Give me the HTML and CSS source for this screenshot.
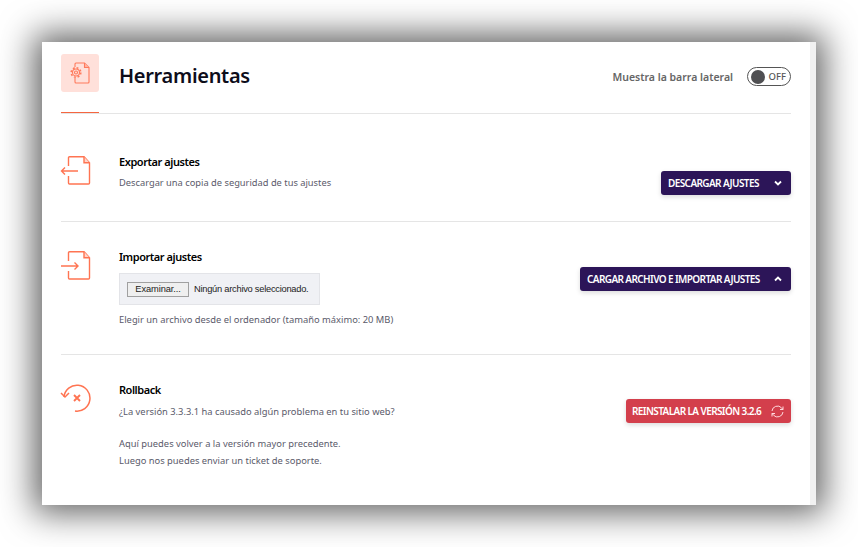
FILE: index.html
```html
<!DOCTYPE html>
<html lang="es">
<head>
<meta charset="utf-8">
<title>Herramientas</title>
<link rel="stylesheet" href="styles.css">
</head>
<body>
<main class="window">
  <div class="content">
    <header class="header">
      <div class="header-icon">
        <svg width="20" height="22" viewBox="0 0 20 22" fill="none" stroke="#ff7a5c" stroke-width="1.100">
          <path d="M5 5V2a1 1 0 0 1 1-1h8.500L19 5.500V20a1 1 0 0 1-1 1H6a1 1 0 0 1-1-1v-4"/>
          <path d="M14.500 1v4.500H19" fill="#ffb3a0"/>
          <circle cx="6" cy="10.500" r="3.500"/>
          <circle cx="6" cy="10.500" r="1.500"/>
          <circle cx="6" cy="10.500" r="4.800" stroke-width="1.600" stroke-dasharray="1.900 1.870"/>
        </svg>
      </div>
      <h1 class="title">Herramientas</h1>
      <div class="sidebar-toggle">
        <span class="toggle-label">Muestra la barra lateral</span>
        <span class="toggle"><span class="knob"></span><span class="toggle-text">OFF</span></span>
      </div>
    </header>

    <section class="row row-export">
      <svg class="row-icon" width="32" height="30" viewBox="0 0 32 30" fill="none" stroke="#ff7452" stroke-width="1.400">
        <path d="M9.500 10V1.700a1 1 0 0 1 1-1H25l5.500 6V27a1 1 0 0 1-1 1H10.500a1 1 0 0 1-1-1v-7"/>
        <path d="M25 .7v6h5.500" fill="#ffd5ca"/>
        <path d="M2.500 15H19M6 11.500 2.500 15 6 18.500"/>
      </svg>
      <div class="row-body">
        <h2 class="row-title">Exportar ajustes</h2>
        <p class="row-text row-text-tight">Descargar una copia de seguridad de tus ajustes</p>
      </div>
      <a class="btn btn-purple btn-export"><span>DESCARGAR AJUSTES</span>
        <svg class="btn-chevron" width="8" height="6" viewBox="0 0 8 6" fill="none" stroke="#fff" stroke-width="1.800"><path d="M1 1.500l3 3 3-3"/></svg>
      </a>
    </section>

    <section class="row row-import">
      <svg class="row-icon" width="32" height="30" viewBox="0 0 32 30" fill="none" stroke="#ff7452" stroke-width="1.400">
        <path d="M9.500 10V1.700a1 1 0 0 1 1-1H25l5.500 6V27a1 1 0 0 1-1 1H10.500a1 1 0 0 1-1-1v-7"/>
        <path d="M25 .7v6h5.500" fill="#ffd5ca"/>
        <path d="M2 15h17M15.500 11.500 19 15l-3.500 3.500"/>
      </svg>
      <div class="row-body">
        <h2 class="row-title">Importar ajustes</h2>
        <div class="file-box">
          <span class="file-btn">Examinar...</span>
          <span class="file-name">Ningún archivo seleccionado.</span>
        </div>
        <p class="row-text">Elegir un archivo desde el ordenador (tamaño máximo: 20 MB)</p>
      </div>
      <a class="btn btn-purple btn-import"><span>CARGAR ARCHIVO E IMPORTAR AJUSTES</span>
        <svg class="btn-chevron" width="8" height="6" viewBox="0 0 8 6" fill="none" stroke="#fff" stroke-width="1.800"><path d="M1 4.500l3-3 3 3"/></svg>
      </a>
    </section>

    <section class="row row-rollback">
      <svg class="row-icon" width="32" height="28" viewBox="0 0 32 28" fill="none" stroke="#ff7452" stroke-width="1.500">
        <path d="M5 13A13 13 0 1 1 16 27"/>
        <path d="M2 9l4 4 4-4"/>
        <path d="M15 11l6 6M21 11l-6 6" stroke-width="1.900"/>
      </svg>
      <div class="row-body">
        <h2 class="row-title">Rollback</h2>
        <p class="row-text">¿La versión 3.3.3.1 ha causado algún problema en tu sitio web?</p>
        <p class="row-text row-note">Aquí puedes volver a la versión mayor precedente.<br>Luego nos puedes enviar un ticket de soporte.</p>
      </div>
      <a class="btn btn-red btn-rollback"><span>REINSTALAR LA VERSIÓN 3.2.6</span>
        <svg width="13" height="13" viewBox="0 0 13 13" fill="none" stroke="#ffd9dd" stroke-width="1"><path d="M1 6a5.500 5.500 0 0 1 9.500-3.200L12 4.500M12 7a5.500 5.500 0 0 1-9.500 3.200L1 8.500"/><path d="M12 1.500v3H9M1 11.500v-3h3"/></svg>
      </a>
    </section>
  </div>
  <div class="scroll-strip"></div>
</main>
</body>
</html>
```

FILE: styles.css
```css
* { box-sizing: border-box; }
html, body { margin: 0; height: 100%; background: #fff; overflow: hidden; }
body {
  padding: 42px;
  font-family: "Noto Sans", "Open Sans", sans-serif;
  color: #000;
}
.window {
  display: flex;
  width: 774px;
  height: 463px;
  background: #fff;
  box-shadow: 0 0 32px 8px rgba(0, 0, 0, .62);
}
.content { flex: 1; padding: 12px 19px 0; }
.scroll-strip { width: 6px; background: #f1f1f1; }

.header {
  position: relative;
  display: flex;
  align-items: flex-start;
  height: 60px;
  border-bottom: 1px solid #e5e5e5;
}
.header::after {
  content: "";
  position: absolute;
  left: 0;
  bottom: 0;
  width: 38px;
  height: 1px;
  background: #f56640;
}
.header-icon {
  display: flex;
  align-items: center;
  justify-content: center;
  width: 38px;
  height: 38px;
  border-radius: 3px;
  background: #ffe0da;
}
.title {
  margin: 6px 0 0 20px;
  font-size: 20px;
  line-height: 32px;
  font-weight: 600;
  letter-spacing: -.3px;
  color: #0d0d1a;
}
.sidebar-toggle {
  display: flex;
  align-items: center;
  gap: 14px;
  margin-left: auto;
  margin-top: 13px;
}
.toggle-label { font-size: 10.500px; font-weight: 600; color: #666; }
.toggle {
  display: flex;
  align-items: center;
  justify-content: space-between;
  width: 44px;
  height: 19px;
  padding: 0 4px 0 3px;
  border: 1px solid #555;
  border-radius: 10px;
}
.knob { width: 14px; height: 14px; border-radius: 50%; background: #4f4f52; }
.toggle-text { font-size: 9.500px; font-weight: 500; color: #555; }

.row {
  position: relative;
  display: flex;
  align-items: flex-start;
  border-bottom: 1px solid #e5e5e5;
}
.row-export { height: 108px; padding-top: 42px; }
.row-import { height: 133px; padding-top: 29px; }
.row-rollback { height: 150px; padding-top: 29px; border-bottom: 0; }
.row-icon { flex: none; margin-left: -2px; }
.row-body { flex: 1; margin: -2px 0 0 28px; }
.row-title {
  margin: 0;
  font-size: 11px;
  line-height: 15px;
  font-weight: 600;
  letter-spacing: -.45px;
  color: #000;
}
.row-text {
  margin: 6px 0 0;
  font-size: 9.350px;
  line-height: 17px;
  color: #5a5a6a;
}
.row-text-tight { margin-top: 5px; font-size: 9.300px; }
.row-note { margin-top: 15px; }
.file-box + .row-text { margin-top: 6px; }

.file-box {
  display: flex;
  align-items: center;
  gap: 5px;
  width: 201px;
  height: 32px;
  margin-top: 9px;
  padding-left: 7px;
  background: #f0f1f5;
  border: 1px solid #e3e4e8;
}
.file-btn {
  display: flex;
  align-items: center;
  justify-content: center;
  width: 62px;
  height: 15px;
  background: #efefef;
  border: 1px solid #a0a0a0;
  font-family: "Liberation Sans", sans-serif;
  font-size: 9.300px;
  letter-spacing: -.1px;
  color: #222;
}
.file-name {
  font-family: "Liberation Sans", sans-serif;
  font-size: 9.300px;
  letter-spacing: -.25px;
  color: #222;
  white-space: nowrap;
}

.btn {
  position: absolute;
  right: 0;
  display: flex;
  align-items: center;
  justify-content: space-between;
  height: 24px;
  padding: 0 9px 0 7px;
  border-radius: 3px;
  font-size: 10px;
  font-weight: 600;
  letter-spacing: -.6px;
  color: #fff;
  white-space: nowrap;
  box-shadow: 0 2px 5px rgba(0, 0, 0, .14);
}
.btn-purple { background: #2c1558; }
.btn-red { background: #d33f4c; padding: 0 7px 0 6px; }
.btn-export { top: 57px; width: 130px; }
.btn-import { top: 45px; width: 211px; }
.btn-rollback { top: 44px; width: 165px; }
```
